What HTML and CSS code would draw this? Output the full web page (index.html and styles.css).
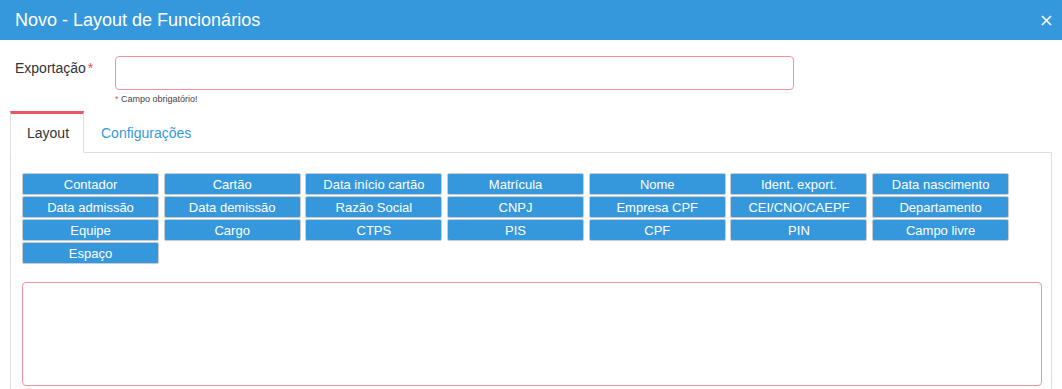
FILE: index.html
```html
<!doctype html>
<html lang="pt-BR">
<head>
  <meta charset="UTF-8" />
  <title>Novo - Layout de Funcionários</title>
  <link rel="stylesheet" href="styles.css">
</head>
<body>
  <div class="modal-header">
    <h1>Novo - Layout de Funcionários</h1>
    <span class="close">
      <svg width="11" height="11" viewBox="0 0 11 11"><path d="M1 1L10 10M10 1L1 10" stroke="#fff" stroke-width="1.6"/></svg>
    </span>
  </div>

  <div class="modal-body">
    <div class="form-row">
      <label>Exportação<span class="req">*</span></label>
      <div class="field">
        <input type="text" class="input-error" />
        <div class="help"><span class="req">*</span> Campo obrigatório!</div>
      </div>
    </div>

    <div class="tabs">
      <div class="tab active">Layout</div>
      <div class="tab">Configurações</div>
      <div class="tab-fill"></div>
    </div>

    <div class="tab-panel">
      <div class="fields">
        <button>Contador</button>
        <button>Cartão</button>
        <button>Data início cartão</button>
        <button>Matrícula</button>
        <button>Nome</button>
        <button>Ident. export.</button>
        <button>Data nascimento</button>
        <button>Data admissão</button>
        <button>Data demissão</button>
        <button>Razão Social</button>
        <button>CNPJ</button>
        <button>Empresa CPF</button>
        <button>CEI/CNO/CAEPF</button>
        <button>Departamento</button>
        <button>Equipe</button>
        <button>Cargo</button>
        <button>CTPS</button>
        <button>PIS</button>
        <button>CPF</button>
        <button>PIN</button>
        <button>Campo livre</button>
        <button>Espaço</button>
      </div>
      <textarea class="layout-text"></textarea>
    </div>
  </div>
</body>
</html>
```

FILE: styles.css
```css
body {
  margin: 0;
  font-family: 'Liberation Sans', Arial, sans-serif;
  color: #333;
  background: #fff;
  overflow: hidden;
}
.modal-header {
  height: 40px;
  background: #3598dc;
  display: flex;
  align-items: center;
  justify-content: space-between;
  padding: 0 10px 0 15px;
}
.modal-header h1 {
  margin: 0;
  font-size: 18px;
  font-weight: normal;
  color: #fff;
}
.close {
  display: flex;
}
.modal-body {
  padding: 16px 10px 0 10px;
}
.form-row {
  display: flex;
}
.form-row label {
  width: 100px;
  padding-left: 5px;
  font-size: 14px;
  line-height: 20px;
  margin-top: 2px;
}
.req {
  color: #e7505a;
  margin-left: 2px;
}
.field input {
  box-sizing: border-box;
  width: 679px;
  height: 34px;
  border: 1px solid #f3949c;
  border-radius: 4px;
  outline: none;
  display: block;
}
.help {
  font-size: 9px;
  color: #444;
  margin-top: 3px;
  line-height: 12px;
}
.help .req {
  margin: 0;
}
.tabs {
  display: flex;
  margin-top: 6px;
  height: 42px;
}
.tab {
  box-sizing: border-box;
  padding: 0 17px;
  font-size: 14px;
  line-height: 38px;
  color: #3598dc;
  border-bottom: 1px solid #ddd;
  border-top: 3px solid transparent;
}
.tab.active {
  color: #333;
  border-top: 3px solid #ed5560;
  border-left: 1px solid #ddd;
  border-right: 1px solid #ddd;
  border-bottom: 1px solid transparent;
  padding: 0 15px 0 16px;
  width: 74px;
}
.tab-fill {
  flex: 1;
  border-bottom: 1px solid #ddd;
}
.tab-panel {
  border-left: 1px solid #ddd;
  border-right: 1px solid #ddd;
  padding: 20px 10px 0 11px;
  height: 216px;
}
.fields {
  display: grid;
  grid-template-columns: repeat(7, 137px);
  column-gap: 4.7px;
  row-gap: 1px;
}
.fields button {
  height: 22px;
  background: #3598dc;
  color: #fff;
  border: 1px solid #c8ccd0;
  border-radius: 2px;
  font-family: 'Liberation Sans', Arial, sans-serif;
  font-size: 13px;
  padding: 0;
}
.layout-text {
  display: block;
  box-sizing: border-box;
  width: 1020px;
  height: 104px;
  margin-top: 18px;
  border: 1px solid #f3949c;
  border-radius: 4px;
  resize: none;
  outline: none;
}
```
